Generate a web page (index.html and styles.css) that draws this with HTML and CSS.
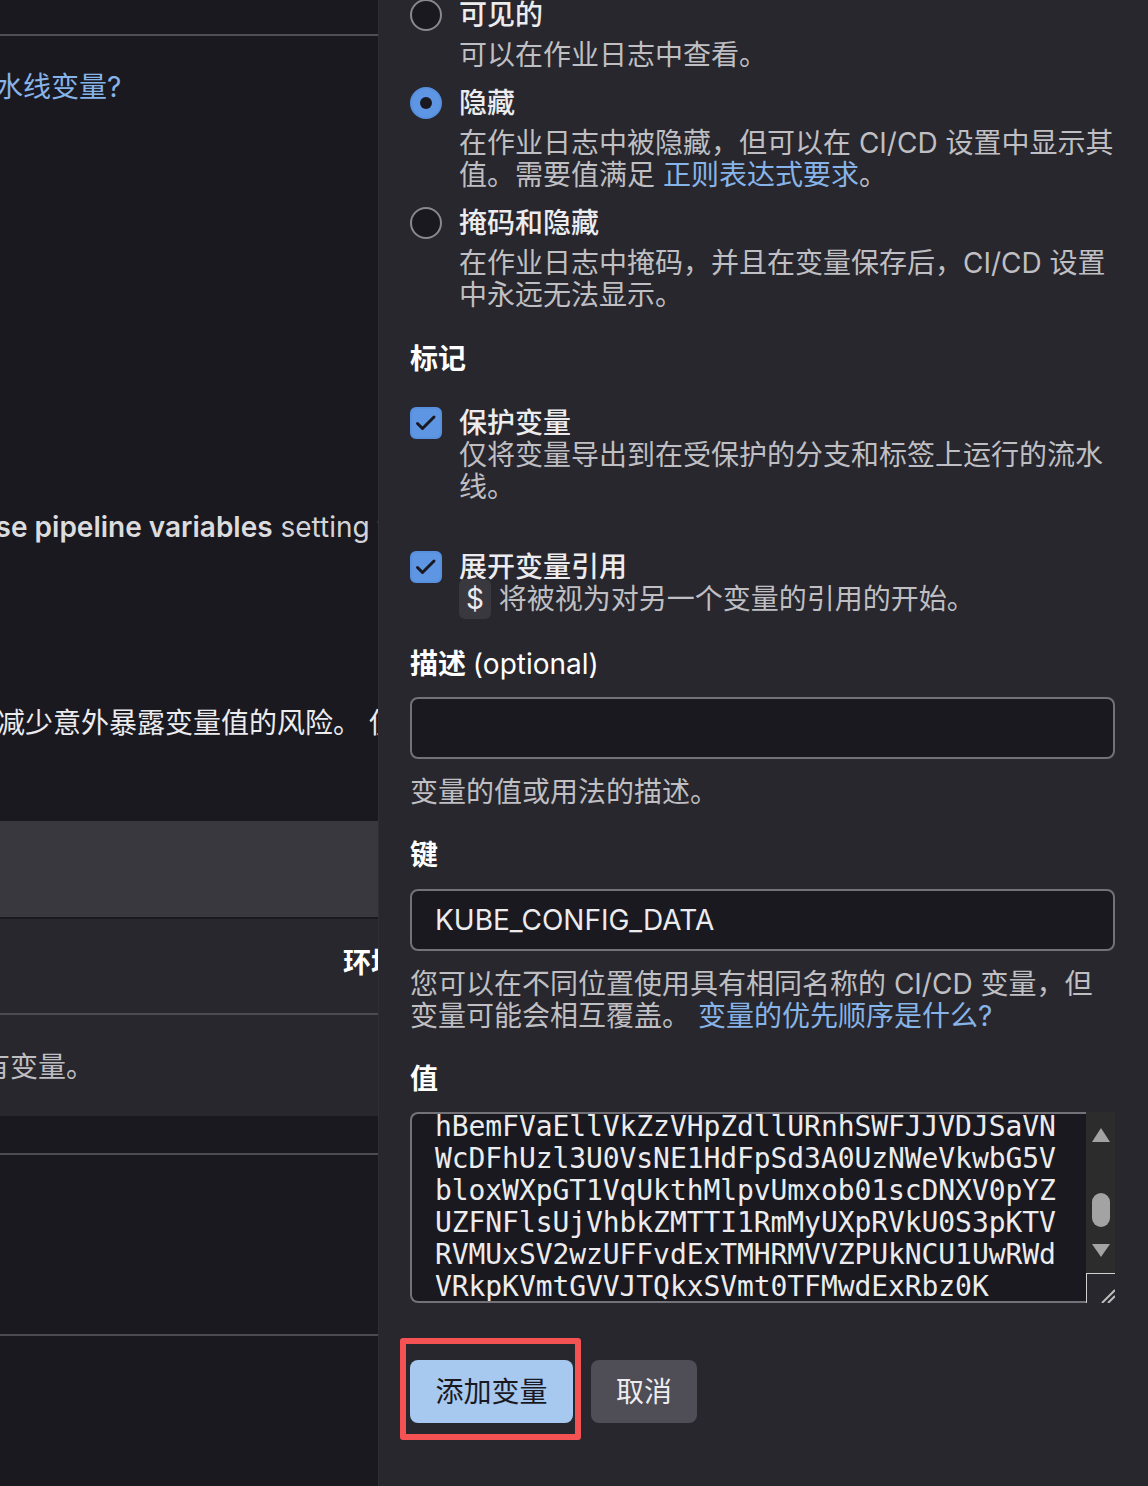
FILE: index.html
```html
<!DOCTYPE html>
<html lang="zh-CN">
<head>
<meta charset="utf-8">
<title>添加变量</title>
<link rel="stylesheet" href="styles.css">
</head>
<body>
<div class="page">
  <div class="bg-page">
    <div class="bg-top"></div>
    <p class="bg-link">什么是流水线变量?</p>
    <p class="bg-setting"><strong>Use pipeline variables</strong> setting to</p>
    <p class="bg-risk">以减少意外暴露变量值的风险。 使用</p>
    <div class="bg-thead"></div>
    <div class="bg-row bg-row-head"><span class="bg-env">环境范围</span></div>
    <div class="bg-row bg-row-empty"><span class="bg-empty">的所有变量。</span></div>
    <div class="bg-gap"></div>
    <div class="bg-section"></div>
  </div>

  <aside class="drawer">
    <div class="opt opt-radio opt-first">
      <span class="radio"></span>
      <div class="opt-text">
        <div class="opt-label">可见的</div>
        <div class="opt-desc">可以在作业日志中查看。</div>
      </div>
    </div>
    <div class="opt opt-radio">
      <span class="radio radio-checked"></span>
      <div class="opt-text">
        <div class="opt-label">隐藏</div>
        <div class="opt-desc">在作业日志中被隐藏，但可以在 CI/CD 设置中显示其值。需要值满足 <a class="link">正则表达式要求</a>。</div>
      </div>
    </div>
    <div class="opt opt-radio">
      <span class="radio"></span>
      <div class="opt-text">
        <div class="opt-label">掩码和隐藏</div>
        <div class="opt-desc">在作业日志中掩码，并且在变量保存后，CI/CD 设置中永远无法显示。</div>
      </div>
    </div>

    <div class="heading heading-flags">标记</div>

    <div class="opt opt-check opt-protect">
      <span class="checkbox"><svg width="28" height="28" viewBox="0 0 28 28"><path d="M5.5 14.5l5 5 11.5-11.5" fill="none" stroke="#1a191f" stroke-width="3" stroke-linecap="round" stroke-linejoin="round"/></svg></span>
      <div class="opt-text">
        <div class="opt-label">保护变量</div>
        <div class="opt-desc">仅将变量导出到在受保护的分支和标签上运行的流水线。</div>
      </div>
    </div>
    <div class="opt opt-check opt-expand">
      <span class="checkbox"><svg width="28" height="28" viewBox="0 0 28 28"><path d="M5.5 14.5l5 5 11.5-11.5" fill="none" stroke="#1a191f" stroke-width="3" stroke-linecap="round" stroke-linejoin="round"/></svg></span>
      <div class="opt-text">
        <div class="opt-label">展开变量引用</div>
        <div class="opt-desc"><code class="code">$</code> 将被视为对另一个变量的引用的开始。</div>
      </div>
    </div>

    <div class="heading heading-desc">描述 <span class="optional">(optional)</span></div>
    <div class="input"></div>
    <div class="help help-desc">变量的值或用法的描述。</div>

    <div class="heading heading-key">键</div>
    <div class="input input-key">KUBE_CONFIG_DATA</div>
    <div class="help help-key">您可以在不同位置使用具有相同名称的 CI/CD 变量，但<br>变量可能会相互覆盖。 <a class="link">变量的优先顺序是什么?</a></div>

    <div class="heading heading-value">值</div>
    <div class="textarea">
      <div class="ta-body">
        <div class="ta-lines">hBemFVaEllVkZzVHpZdllURnhSWFJJVDJSaVN
WcDFhUzl3U0VsNE1HdFpSd3A0UzNWeVkwbG5V
bloxWXpGT1VqUkthMlpvUmxob01scDNXV0pYZ
UZFNFlsUjVhbkZMTTI1RmMyUXpRVkU0S3pKTV
RVMUxSV2wzUFFvdExTMHRMVVZPUkNCU1UwRWd
VRkpKVmtGVVJTQkxSVmt0TFMwdExRbz0K</div>
      </div>
      <div class="ta-side">
        <div class="sb">
          <span class="sb-up"></span>
          <span class="sb-thumb"></span>
          <span class="sb-down"></span>
        </div>
        <div class="resizer">
          <svg width="28" height="29" viewBox="0 0 28 29"><path d="M15 29L28 16M21 29L28 22" stroke="#bdbdbd" stroke-width="2"/></svg>
        </div>
      </div>
    </div>

    <div class="actions">
      <button class="btn btn-primary" type="button">添加变量<span class="highlight"></span></button>
      <button class="btn btn-default" type="button">取消</button>
    </div>
  </aside>
</div>
</body>
</html>
```
FILE: styles.css
```css
* {
  box-sizing: border-box;
}

html,
body {
  margin: 0;
  padding: 0;
}

body {
  background: #1a191f;
  color: #ececef;
  font-family: Inter, "Noto Sans CJK SC", sans-serif;
  font-size: 28px;
  line-height: 32px;
}

.page {
  display: flex;
  width: 1148px;
  height: 1486px;
  overflow: hidden;
}

/* ---------- background page (left) ---------- */

.bg-page {
  flex: none;
  width: 378px;
  height: 1486px;
  overflow: hidden;
  background: #1a191f;
  display: flex;
  flex-direction: column;
}

.bg-page p {
  margin: 0;
  white-space: nowrap;
}

.bg-top {
  flex: none;
  height: 36px;
  border-bottom: 2px solid #4f4e54;
}

.bg-link {
  color: #87b4e8;
  margin: 35px 0 0 -117px !important;
}

.bg-setting {
  color: #d4d4d8;
  margin: 408px 0 0 -25px !important;
}

.bg-setting strong {
  font-weight: 600;
  color: #dcdcde;
}

.bg-risk {
  color: #ececef;
  margin: 164px 0 0 -31px !important;
}

.bg-thead {
  flex: none;
  margin-top: 82px;
  height: 98px;
  background: #3a383f;
  border-bottom: 2px solid #1a191f;
}

.bg-row {
  flex: none;
  background: #28272d;
  white-space: nowrap;
}

.bg-row-head {
  height: 96px;
  border-bottom: 2px solid #4c4b51;
  padding: 28px 0 0 343px;
}

.bg-env {
  font-weight: 700;
  color: #ffffff;
}

.bg-row-empty {
  height: 101px;
  padding-top: 36px;
}

.bg-empty {
  display: block;
  margin-left: -74px;
  color: #bfbfc3;
}

.bg-gap {
  flex: none;
  height: 39px;
  border-bottom: 2px solid #4c4b51;
}

.bg-section {
  flex: none;
  height: 181px;
  border-bottom: 2px solid #4c4b51;
}

/* ---------- drawer ---------- */

.drawer {
  flex: 1;
  background: #28272d;
  border-left: 1px solid #2f2e35;
  padding: 0 33px 0 31px;
}

.opt {
  display: flex;
  gap: 17px;
}

.opt-first {
  margin-top: -1px;
}

.opt-radio + .opt-radio {
  margin-top: 16px;
}

.opt-text {
  flex: 1;
  min-width: 0;
}

.opt-label {
  color: #ececef;
  font-weight: 500;
}

.opt-radio .opt-desc {
  margin-top: 8px;
}

.opt-desc {
  color: #bfbfc3;
}

.radio {
  flex: none;
  position: relative;
  width: 32px;
  height: 32px;
  border-radius: 50%;
  border: 2px solid #89888d;
  background: #1a191f;
}

.radio-checked {
  background: #5f96e3;
  border-color: #5690de;
}

.radio-checked::after {
  content: "";
  position: absolute;
  left: 8px;
  top: 8px;
  width: 12px;
  height: 12px;
  border-radius: 50%;
  background: #1a191f;
}

.checkbox {
  flex: none;
  width: 32px;
  height: 32px;
  border-radius: 6px;
  border: 2px solid #5690de;
  background: #5f96e3;
  display: flex;
  align-items: center;
  justify-content: center;
}

.heading {
  font-weight: 700;
  color: #ffffff;
}

.heading-flags {
  margin-top: 32px;
}

.opt-protect {
  margin-top: 32px;
}

.opt-expand {
  margin-top: 48px;
}

.code {
  font-family: Inter, "Noto Sans CJK SC", sans-serif;
  font-size: 28px;
  color: #ececef;
  background: #3a383f;
  border-radius: 6px;
  padding: 3px 7px;
}

.heading-desc {
  margin-top: 33px;
}

.optional {
  font-weight: 400;
}

.input {
  margin-top: 17px;
  height: 62px;
  border: 2px solid #737278;
  border-radius: 8px;
  background: #1a191f;
  padding: 0 23px;
  display: flex;
  align-items: center;
  color: #ececef;
}

.input-key {
  margin-top: 18px;
}

.help {
  margin-top: 17px;
  color: #bfbfc3;
}

.link {
  color: #87b4e8;
  text-decoration: none;
}

.heading-key,
.heading-value {
  margin-top: 31px;
}

.textarea {
  margin-top: 17px;
  height: 191px;
  display: flex;
}

.ta-body {
  flex: 1;
  min-width: 0;
  border: 2px solid #737278;
  border-right: none;
  border-radius: 8px 0 0 8px;
  background: #1a191f;
  overflow: hidden;
  padding-left: 23px;
}

.ta-lines {
  margin-top: -3px;
  font-family: "DejaVu Sans Mono", "Liberation Mono", monospace;
  font-size: 28px;
  line-height: 32px;
  letter-spacing: -0.08px;
  white-space: pre;
  color: #ececef;
}

.ta-side {
  flex: none;
  width: 29px;
  display: flex;
  flex-direction: column;
}

.sb {
  height: 161px;
  background: #2c2c2c;
  display: flex;
  flex-direction: column;
  align-items: center;
  padding-top: 16px;
}

.sb-up {
  width: 0;
  height: 0;
  border-left: 9px solid transparent;
  border-right: 9px solid transparent;
  border-bottom: 14px solid #a3a3a3;
}

.sb-thumb {
  margin-top: 51px;
  width: 18px;
  height: 34px;
  border-radius: 9px;
  background: #a3a3a3;
}

.sb-down {
  margin-top: 17px;
  width: 0;
  height: 0;
  border-left: 9px solid transparent;
  border-right: 9px solid transparent;
  border-top: 13px solid #a3a3a3;
}

.resizer {
  height: 30px;
  border-top: 1px solid #d0d0d0;
  border-left: 1px solid #d0d0d0;
  background: #28272d;
  display: flex;
  align-items: flex-end;
  justify-content: flex-end;
}

.resizer svg {
  display: block;
}

.actions {
  margin-top: 57px;
  display: flex;
  gap: 18px;
}

.btn {
  position: relative;
  height: 63px;
  padding: 0 25px;
  border: none;
  border-radius: 8px;
  font: inherit;
  font-size: 28px;
  line-height: 32px;
  cursor: pointer;
}

.btn-primary {
  width: 163px;
  background: #a7c8ef;
  color: #1a191f;
}

.btn-default {
  width: 106px;
  background: #4f4d55;
  color: #ececef;
}

.highlight {
  position: absolute;
  left: -10px;
  top: -22px;
  width: 181px;
  height: 102px;
  border: 6px solid #f55353;
  border-radius: 3px;
  pointer-events: none;
}
```
